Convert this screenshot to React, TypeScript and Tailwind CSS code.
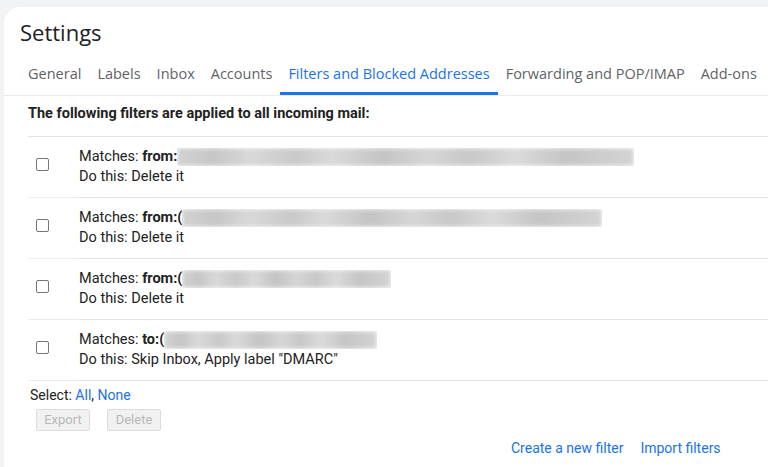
import React from 'react';

const tabs = [
  'General',
  'Labels',
  'Inbox',
  'Accounts',
  'Filters and Blocked Addresses',
  'Forwarding and POP/IMAP',
  'Add-ons',
];

interface Filter {
  field: string;
  bar: number;
  action: string;
}

const filters: Filter[] = [
  { field: 'from:', bar: 457, action: 'Delete it' },
  { field: 'from:(', bar: 420, action: 'Delete it' },
  { field: 'from:(', bar: 209, action: 'Delete it' },
  { field: 'to:(', bar: 213, action: 'Skip Inbox, Apply label "DMARC"' },
];

// redacted address, blurred grey block
const Redacted: React.FC<{ width: number }> = ({ width }) => (
  <span className="inline-block h-[18px] overflow-hidden align-middle" style={{ width }}>
    <span className="block h-full w-full blur-[2px] bg-[linear-gradient(90deg,#d2d2d2,#c6c6c6_8%,#d9d9d9_16%,#c9c9c9_26%,#dadada_34%,#c4c4c4_45%,#d6d6d6_55%,#c8c8c8_64%,#dbdbdb_74%,#c5c5c5_85%,#d4d4d4)]" />
  </span>
);

export default function App() {
  return (
    <div className="w-[768px] h-[467px] overflow-hidden bg-[#f1f3f4] pl-[4px] pt-[7px] font-['Roboto','Liberation_Sans',sans-serif]">
      <div className="h-full bg-white rounded-tl-[16px]">
        <h1 className="pl-[16px] pt-[12px] h-[46px] text-[22px] leading-[26px] text-[#202124] font-['Open_Sans','Roboto',sans-serif]">
          Settings
        </h1>

        <div className="flex pl-[16px] border-b border-[#e8eaed] whitespace-nowrap">
          {tabs.map(t => {
            const active = t === 'Filters and Blocked Addresses';
            return (
              <div
                key={t}
                className={`px-[8px] h-[42px] pt-[2px] flex items-center text-[14.5px] font-['Open_Sans','Roboto',sans-serif] border-b-[3px] ${
                  active ? 'text-[#1a73e8] border-[#1a73e8]' : 'text-[#5f6368] border-transparent'
                }`}
              >
                {t}
              </div>
            );
          })}
        </div>

        <div className="pl-[24px]">
          <div className="h-[40px] pb-[4px] flex items-center text-[14.5px] font-bold text-[#222]">
            The following filters are applied to all incoming mail:
          </div>

          <div className="border-t border-[#e3e3e3]">
            {filters.map((f, i) => (
              <div key={i} className="flex h-[61px]">
                <div className="w-[51px] pt-[21px] pl-[8px] border-b border-[#ececec]">
                  <div className="w-[13px] h-[13px] rounded-[2px] border border-[#767676] bg-white" />
                </div>
                <div className="flex-1 flex flex-col justify-center text-[14.5px] leading-[20px] text-[#222] border-b border-[#e3e3e3]">
                  <div className="flex items-center whitespace-nowrap">
                    <span>Matches:&nbsp;</span>
                    <span className="font-bold">{f.field}</span>
                    <Redacted width={f.bar} />
                  </div>
                  <div>Do this: {f.action}</div>
                </div>
              </div>
            ))}
          </div>

          <div className="pl-[2px] pt-[4px] h-[26px] text-[14px] leading-[20px] text-[#222]">
            Select: <span className="text-[#1a73e8]">All</span>, <span className="text-[#1a73e8]">None</span>
          </div>

          <div className="flex gap-[17px] pl-[8px] pt-[2px]">
            <button className="h-[22px] w-[54px] rounded-[2px] border border-[#dcdcdc] bg-[#f1f1f1] text-[13px] text-[#b8b8b8]">
              Export
            </button>
            <button className="h-[22px] w-[54px] rounded-[2px] border border-[#dcdcdc] bg-[#f1f1f1] text-[13px] text-[#b8b8b8]">
              Delete
            </button>
          </div>

          <div className="flex gap-[17px] pl-[483px] pt-[7px] text-[14px] leading-[20px] text-[#1a73e8] whitespace-nowrap">
            <span>Create a new filter</span>
            <span>Import filters</span>
          </div>
        </div>
      </div>
    </div>
  );
}
